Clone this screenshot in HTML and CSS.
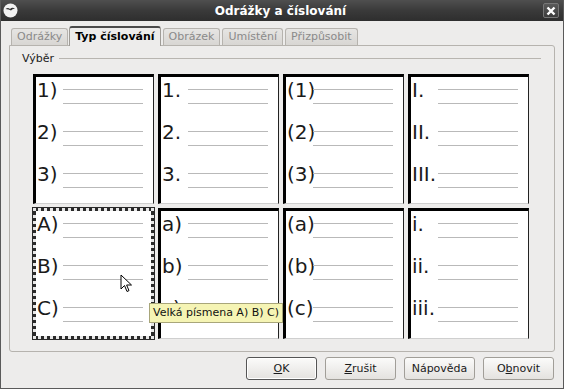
FILE: index.html
```html
<!DOCTYPE html>
<html lang="cs">
<head>
    <meta charset="UTF-8">
    <title>Odrážky a číslování</title>
    <link rel="stylesheet" href="styles.css">
</head>
<body>
    <div class="window">
        <div class="titlebar">
            <svg class="app-icon" width="15" height="15" viewBox="0 0 15 15">
                <circle cx="7.5" cy="7.5" r="7" fill="#f2f2f2"/>
                <path d="M2.5 6 Q5 4 7 6 Q9 4 12 5.5 Q9 6 8 7.5 Q6 6 2.5 6 Z" fill="#333"/>
            </svg>
            <span class="title">Odrážky a číslování</span>
            <span class="close">
                <svg width="14" height="14" viewBox="0 0 14 14">
                    <path d="M3.5 3.5 L10.5 10.5 M10.5 3.5 L3.5 10.5" stroke="#fff" stroke-width="2.4"/>
                </svg>
            </span>
        </div>

        <div class="content">
            <div class="tabs">
                <div class="tab">Odrážky</div>
                <div class="tab active">Typ číslování</div>
                <div class="tab">Obrázek</div>
                <div class="tab">Umístění</div>
                <div class="tab">Přizpůsobit</div>
            </div>

            <div class="panel">
                <div class="group-title"><span>Výběr</span></div>

                <div class="grid">
                    <div class="cell">
                        <div class="item"><span class="num">1)</span><span class="lines"></span></div>
                        <div class="item"><span class="num">2)</span><span class="lines"></span></div>
                        <div class="item"><span class="num">3)</span><span class="lines"></span></div>
                    </div>
                    <div class="cell">
                        <div class="item"><span class="num">1.</span><span class="lines"></span></div>
                        <div class="item"><span class="num">2.</span><span class="lines"></span></div>
                        <div class="item"><span class="num">3.</span><span class="lines"></span></div>
                    </div>
                    <div class="cell">
                        <div class="item"><span class="num">(1)</span><span class="lines"></span></div>
                        <div class="item"><span class="num">(2)</span><span class="lines"></span></div>
                        <div class="item"><span class="num">(3)</span><span class="lines"></span></div>
                    </div>
                    <div class="cell">
                        <div class="item"><span class="num">I.</span><span class="lines"></span></div>
                        <div class="item"><span class="num">II.</span><span class="lines"></span></div>
                        <div class="item"><span class="num">III.</span><span class="lines"></span></div>
                    </div>

                    <div class="cell selected">
                        <div class="item"><span class="num">A)</span><span class="lines"></span></div>
                        <div class="item"><span class="num">B)</span><span class="lines"></span></div>
                        <div class="item"><span class="num">C)</span><span class="lines"></span></div>
                    </div>
                    <div class="cell">
                        <div class="item"><span class="num">a)</span><span class="lines"></span></div>
                        <div class="item"><span class="num">b)</span><span class="lines"></span></div>
                        <div class="item"><span class="num">c)</span><span class="lines"></span></div>
                    </div>
                    <div class="cell">
                        <div class="item"><span class="num">(a)</span><span class="lines"></span></div>
                        <div class="item"><span class="num">(b)</span><span class="lines"></span></div>
                        <div class="item"><span class="num">(c)</span><span class="lines"></span></div>
                    </div>
                    <div class="cell">
                        <div class="item"><span class="num">i.</span><span class="lines"></span></div>
                        <div class="item"><span class="num">ii.</span><span class="lines"></span></div>
                        <div class="item"><span class="num">iii.</span><span class="lines"></span></div>
                    </div>
                </div>
            </div>

            <div class="buttons">
                <button class="btn default"><u>O</u>K</button>
                <button class="btn"><u>Z</u>rušit</button>
                <button class="btn">Nápověda</button>
                <button class="btn">O<u>b</u>novit</button>
            </div>
        </div>

        <!-- mouse pointer + tooltip over the grid -->
        <svg class="cursor" width="14" height="20" viewBox="0 0 14 20">
            <path d="M1 1 L1 15 L4.5 11.5 L7 17.5 L9 16.6 L6.6 11 L11.5 11 Z" fill="#fff" stroke="#000" stroke-width="1"/>
        </svg>
        <div class="tooltip">Velká písmena A) B) C)</div>
    </div>
</body>
</html>
```

FILE: styles.css
```css
* {
    box-sizing: border-box;
}

body {
    margin: 0;
    font-family: 'DejaVu Sans', sans-serif;
    background: #edeceb;
}

.window {
    position: relative;
    width: 564px;
    height: 389px;
    background: #edeceb;
    border-left: 1px solid #5a5a5a;
    border-right: 1px solid #5a5a5a;
    border-bottom: 1px solid #5a5a5a;
    overflow: hidden;
}

/* Title bar */
.titlebar {
    height: 21px;
    margin: 0 -1px;
    background: linear-gradient(#4f4f4f 0%, #3a3a3a 50%, #2e2e2e 100%);
    display: flex;
    align-items: center;
    padding: 0 5px 0 3px;
}

.app-icon {
    flex: none;
}

.title {
    flex: 1;
    text-align: center;
    color: #fff;
    font-weight: bold;
    font-size: 12px;
}

.close {
    width: 16px;
    height: 15px;
    border: 1px solid #777;
    border-radius: 2px;
    background: linear-gradient(#5a5a5a, #3c3c3c);
    display: flex;
    align-items: center;
    justify-content: center;
}

.content {
    padding: 4px 8px 0 8px;
}

/* Tabs */
.tabs {
    display: flex;
    align-items: flex-end;
    height: 20px;
    padding-left: 2px;
    position: relative;
    z-index: 1;
}

.tab {
    height: 17px;
    padding: 0 5px;
    margin-right: 2px;
    font-size: 11px;
    line-height: 16px;
    color: #8a8a8a;
    background: linear-gradient(#e6e5e3, #d8d6d3);
    border: 1px solid #b6b3ae;
    border-bottom: none;
    border-radius: 3px 3px 0 0;
}

.tab.active {
    height: 20px;
    margin: 0 2px -1px -1px;
    padding-top: 1px;
    color: #000;
    font-weight: bold;
    background: #edeceb;
    border-color: #9f9c97;
    border-top: 2px solid #4a4a4a;
}

.panel {
    height: 307px;
    border: 1px solid #b6b3ae;
    border-radius: 0 3px 3px 3px;
    padding: 5px 13px 0 12px;
}

.group-title {
    display: flex;
    align-items: center;
    font-size: 11px;
    color: #222;
    height: 14px;
}

.group-title::after {
    content: "";
    flex: 1;
    height: 1px;
    background: #b8b5b0;
    margin-left: 5px;
}

/* Numbering previews */
.grid {
    display: grid;
    grid-template-columns: repeat(4, 121px);
    grid-template-rows: 130px 131px;
    gap: 4px 4px;
    margin: 9px 0 0 11px;
}

.cell {
    background: #fff;
    border-top: 3px solid #000;
    border-left: 3px solid #000;
    border-right: 1px solid #222;
    border-bottom: 1px solid #cfcfcf;
    padding-top: 3px;
}

.cell.selected {
    border: 3px dotted #e8e8e8;
    outline: 1px solid #2a2a2a;
    background: linear-gradient(#fff, #fff) padding-box, #2a2a2a border-box;
}

.item {
    display: grid;
    grid-template-columns: 27px 80px;
    height: 42px;
}

.num {
    font-size: 20px;
    line-height: 20px;
    color: #1a1a1a;
    padding-left: 1px;
    white-space: nowrap;
}

.lines {
    display: block;
    height: 15px;
    margin-top: 9px;
    border-top: 1px solid #b9b9b9;
    border-bottom: 1px solid #b9b9b9;
}

/* Buttons */
.buttons {
    display: flex;
    justify-content: flex-end;
    gap: 8px;
    padding: 5px 1px 0 0;
}

.btn {
    width: 71px;
    height: 23px;
    font-family: 'DejaVu Sans', sans-serif;
    font-size: 11px;
    color: #1a1a1a;
    background: linear-gradient(#fbfbfa, #e4e2df);
    border: 1px solid #a19e98;
    border-radius: 3px;
    padding: 0;
}

.btn.default {
    border-color: #555;
    box-shadow: inset 0 0 0 1px #fff;
}

/* Overlays */
.cursor {
    position: absolute;
    left: 119px;
    top: 274px;
}

.tooltip {
    position: absolute;
    left: 148px;
    top: 303px;
    height: 20px;
    padding: 0 3px;
    font-size: 11px;
    line-height: 18px;
    color: #111;
    background: #f5f4b4;
    border: 1px solid #a8a67a;
    white-space: nowrap;
}
```
